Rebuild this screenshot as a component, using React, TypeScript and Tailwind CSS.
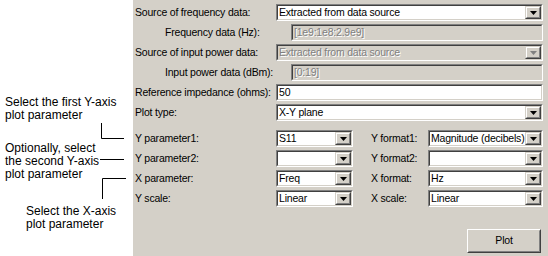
import React from 'react';

const face = 'bg-[#d4d0c8]';

// Win2000-style sunken frame (2px: gray/white outer, dark/face inner)
const Sunken: React.FC<{ className?: string; inner?: string; children?: React.ReactNode }> = ({ className = '', inner = '', children }) => (
  <div className={`border border-t-[#808080] border-l-[#808080] border-b-white border-r-white ${className}`}>
    <div className={`h-full border border-t-[#404040] border-l-[#404040] border-b-[#d4d0c8] border-r-[#d4d0c8] ${inner}`}>
      {children}
    </div>
  </div>
);

const Arrow: React.FC<{ disabled?: boolean }> = ({ disabled }) => (
  <div className={`h-full w-[16px] shrink-0 ${face} border border-t-[#d4d0c8] border-l-[#d4d0c8] border-b-[#404040] border-r-[#404040]`}>
    <div className="h-full flex items-center justify-center border border-t-white border-l-white border-b-[#808080] border-r-[#808080]">
      <svg width="7" height="4" viewBox="0 0 7 4">
        <path d="M0 0H7L3.5 4Z" fill={disabled ? '#808080' : '#000'} />
      </svg>
    </div>
  </div>
);

const Combo: React.FC<{ value?: string; className?: string; disabled?: boolean }> = ({ value = '', className = '', disabled }) => (
  <Sunken className={`h-[17px] ${className}`} inner={`flex ${disabled ? face : 'bg-white'}`}>
    <span
      className={`flex-1 whitespace-nowrap overflow-hidden pl-[1px] leading-[13px] ${disabled ? 'text-[#808080] [text-shadow:1px_1px_0_#fff]' : 'text-black'}`}
    >
      {value}
    </span>
    <Arrow disabled={disabled} />
  </Sunken>
);

const Field: React.FC<{ value: string; className?: string; disabled?: boolean }> = ({ value, className = '', disabled }) => (
  <Sunken className={`h-[17px] ${className}`} inner={disabled ? face : 'bg-white'}>
    <span
      className={`block pl-[1px] leading-[13px] ${disabled ? 'text-[#808080] [text-shadow:1px_1px_0_#fff]' : 'text-black'}`}
    >
      {value}
    </span>
  </Sunken>
);

const Row: React.FC<{ label: string; indent?: boolean; children: React.ReactNode }> = ({ label, indent, children }) => (
  <div className="flex items-center h-[17px]">
    <span className={`w-[141px] shrink-0 whitespace-nowrap ${indent ? 'pl-[30px]' : ''}`}>{label}</span>
    <div className={`flex-1 ${indent ? 'pl-[15px]' : ''}`}>{children}</div>
  </div>
);

const PairRow: React.FC<{ l1: string; v1: string; l2: string; v2: string }> = ({ l1, v1, l2, v2 }) => (
  <div className="flex items-center h-[17px]">
    <span className="w-[141px] shrink-0">{l1}</span>
    <Combo value={v1} className="w-[77px]" />
    <span className="w-[57px] ml-[18px] shrink-0 whitespace-nowrap">{l2}</span>
    <Combo value={v2} className="w-[115px]" />
  </div>
);

export default function App() {
  return (
    <div className="w-[548px] h-[256px] flex bg-white text-black font-['Liberation_Sans',Arial,sans-serif] text-[10.5px] tracking-[-0.2px] overflow-hidden">
      {/* callout notes */}
      <div className="relative w-[133px] shrink-0 text-[12px] leading-[13px] tracking-normal text-black">
        <div className="pl-[5px] pt-[96px]">
          <p>Select the first Y-axis</p>
          <p>plot parameter</p>
        </div>
        <div className="pl-[5px] mt-[20px]">
          <p>Optionally, select</p>
          <p>the second Y-axis</p>
          <p>plot parameter</p>
        </div>
        <div className="pl-[26px] mt-[24px]">
          <p>Select the X-axis</p>
          <p>plot parameter</p>
        </div>
        <svg className="absolute inset-0 pointer-events-none" width="133" height="256">
          <path d="M101.5 123V138.5H124" stroke="#000" fill="none" />
          <path d="M100 159.5H124" stroke="#000" fill="none" />
          <path d="M102.5 199V178.5H126" stroke="#000" fill="none" />
        </svg>
      </div>

      {/* dialog panel */}
      <div className={`flex-1 ${face} pl-[2px] pr-[5px] pt-[4px] flex flex-col`}>
        <div className="flex flex-col gap-[3px]">
          <Row label="Source of frequency data:">
            <Combo value="Extracted from data source" />
          </Row>
          <Row label="Frequency data (Hz):" indent>
            <Field value="[1e9:1e8:2.9e9]" disabled />
          </Row>
          <Row label="Source of input power data:">
            <Combo value="Extracted from data source" disabled />
          </Row>
          <Row label="Input power data (dBm):" indent>
            <Field value="[0:19]" disabled />
          </Row>
          <Row label="Reference impedance (ohms):">
            <Field value="50" />
          </Row>
          <Row label="Plot type:">
            <Combo value="X-Y plane" />
          </Row>
        </div>

        <div className="flex flex-col gap-[3px] mt-[9px]">
          <PairRow l1="Y parameter1:" v1="S11" l2="Y format1:" v2="Magnitude (decibels)" />
          <PairRow l1="Y parameter2:" v1="" l2="Y format2:" v2="" />
          <PairRow l1="X parameter:" v1="Freq" l2="X format:" v2="Hz" />
          <PairRow l1="Y scale:" v1="Linear" l2="X scale:" v2="Linear" />
        </div>

        <div className="flex justify-end mt-[22px] mr-[2px]">
          <button
            className={`w-[74px] h-[24px] ${face} border border-t-white border-l-white border-b-[#404040] border-r-[#404040]`}
          >
            <div className="h-full flex items-center justify-center border border-t-[#d4d0c8] border-l-[#d4d0c8] border-b-[#808080] border-r-[#808080]">
              Plot
            </div>
          </button>
        </div>
      </div>
    </div>
  );
}
